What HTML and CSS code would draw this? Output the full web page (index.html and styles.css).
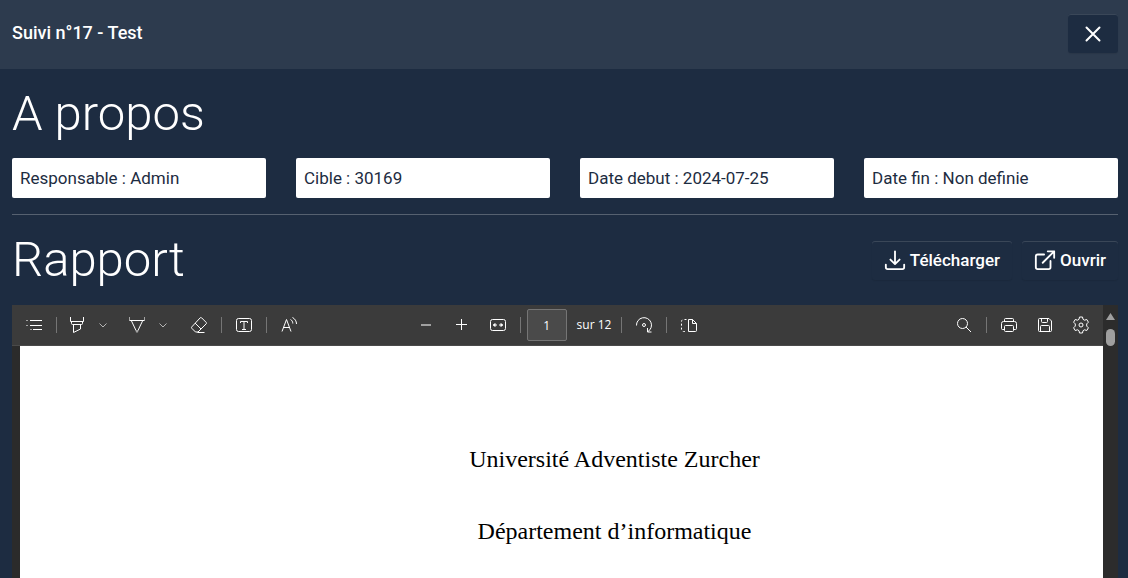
FILE: index.html
```html
<!DOCTYPE html>
<html lang="fr">
<head>
<meta charset="utf-8">
<meta name="viewport" content="width=device-width, initial-scale=1">
<title>Suivi n°17 - Test</title>
<link rel="stylesheet" href="styles.css">
</head>
<body class="dialog">
<header class="dialog-header">
  <h1 class="dialog-title">Suivi n°17 - Test</h1>
  <button class="btn btn-close" type="button" aria-label="Fermer">
    <svg class="icon-close" viewBox="0 0 16 16"><path d="M1.500 1.500l13 13M14.500 1.500l-13 13"/></svg>
  </button>
</header>
<main class="dialog-body">
  <h2 class="section-title">A propos</h2>
  <div class="facts">
    <p class="fact">Responsable : Admin</p>
    <p class="fact">Cible : 30169</p>
    <p class="fact">Date debut : 2024-07-25</p>
    <p class="fact">Date fin : Non definie</p>
  </div>
  <hr class="rule">
  <div class="report-head">
    <h2 class="section-title">Rapport</h2>
    <div class="actions">
      <button class="btn" type="button">
        <svg class="icon" viewBox="0 0 24 24"><path d="M12 2.500v13.500M7 11.500l5 5 5-5M2 17v3a2 2 0 0 0 2 2h16a2 2 0 0 0 2-2v-3"/></svg>
        <span>Télécharger</span>
      </button>
      <button class="btn" type="button">
        <svg class="icon" viewBox="0 0 24 24"><path d="M11 6H4a2 2 0 0 0-2 2v12a2 2 0 0 0 2 2h12a2 2 0 0 0 2-2v-7M15 2.500h7v7M22 2.500L9.500 15"/></svg>
        <span>Ouvrir</span>
      </button>
    </div>
  </div>
  <section class="viewer" aria-label="Rapport PDF">
    <div class="viewer-main">
      <div class="toolbar">
        <div class="tools">
          <button class="tool" type="button" aria-label="Table des matières"><svg class="glyph" viewBox="0 0 18 18"><path d="M5 4.500h12M5 9.500h12M8 13.500h9"/><path class="soft" d="M1 4.500h2M1 9.500h2M5 13.500h2"/></svg></button>
          <span class="sep"></span>
          <button class="tool tool-split" type="button" aria-label="Surligner"><svg class="glyph" viewBox="0 0 18 18"><path d="M2.500 1v4.500h13V1M3.500 5.500v2a1 1 0 0 0 1 1h9a1 1 0 0 0 1-1v-2M5.500 8.500v8l7-3.500v-4.500"/></svg></button>
          <button class="tool tool-menu" type="button" aria-label="Options de surlignage"><svg class="chevron" viewBox="0 0 10 10"><path d="M1.500 3.500l3.500 3.500 3.500-3.500"/></svg></button>
          <span class="space"></span>
          <button class="tool tool-split" type="button" aria-label="Dessiner"><svg class="glyph" viewBox="0 0 18 18"><path class="soft" d="M1.500 1v3.500M16.500 1v3.500"/><path d="M1.500 4.500h15M3.500 5l4.500 9.500h2l4.500-9.500"/><path class="tip" d="M7.500 14h3l-.5 2.500h-2z"/></svg></button>
          <button class="tool tool-menu" type="button" aria-label="Options de dessin"><svg class="chevron" viewBox="0 0 10 10"><path d="M1.500 3.500l3.500 3.500 3.500-3.500"/></svg></button>
          <span class="space"></span>
          <button class="tool" type="button" aria-label="Effacer"><svg class="glyph" viewBox="0 0 18 18"><path d="M10.200 1.800a1 1 0 0 1 1.400 0l4.600 4.600a1 1 0 0 1 0 1.400L8 16H5.500l-3.700-3.700a1 1 0 0 1 0-1.400zM5 7l6 6M7.500 16.500h7"/></svg></button>
          <span class="sep"></span>
          <button class="tool" type="button" aria-label="Ajouter du texte"><svg class="glyph" viewBox="0 0 18 18"><rect x="1.500" y="2.500" width="15" height="13" rx="2"/><path d="M5.500 7V5.500h7V7M9 5.500v8M7 13.500h4"/></svg></button>
          <span class="sep"></span>
          <button class="tool" type="button" aria-label="Lecture à voix haute"><svg class="glyph" viewBox="0 0 18 18"><path d="M2 15.500L6.500 3.500l4.500 12M3.500 11.500h6M10.500 3.500c1.500.8 2.300 2.200 2.300 4M12.500 1.500c2.500 1.300 4 3.700 4 6.500"/></svg></button>
        </div>
        <div class="tools">
          <button class="tool tool-off" type="button" aria-label="Zoom arrière"><svg class="glyph" viewBox="0 0 18 18"><path stroke-width="2" d="M4 9h10"/></svg></button>
          <button class="tool" type="button" aria-label="Zoom avant"><svg class="glyph" viewBox="0 0 18 18"><path d="M3 8.500h11M8.500 3v11"/></svg></button>
          <button class="tool" type="button" aria-label="Ajuster à la largeur"><svg class="glyph" viewBox="0 0 18 18"><rect x="1.500" y="3.500" width="15" height="11" rx="2"/><path d="M4 9h4M10 9h4"/><path fill="currentColor" d="M6 7.500L4.500 9 6 10.500zM12 7.500L13.500 9 12 10.500z"/></svg></button>
          <span class="sep"></span>
          <label class="pager"><input class="page-input" type="text" value="1" aria-label="Numéro de page"><span>sur 12</span></label>
          <span class="sep"></span>
          <button class="tool" type="button" aria-label="Faire pivoter"><svg class="glyph" viewBox="0 0 18 18"><path d="M1.500 9.500a7.500 7.500 0 1 1 11.500 6M12.500 12v4h4"/><circle cx="9" cy="9" r="1.500"/></svg></button>
          <span class="sep"></span>
          <button class="tool" type="button" aria-label="Affichage de la page"><svg class="glyph" viewBox="0 0 18 18"><path d="M8.500 3.500h4l4 4v7a1 1 0 0 1-1 1h-7zM12.500 3.500v4h4"/><path stroke-dasharray="2 2" d="M6.500 3.500h-3a2 2 0 0 0-2 2v8a2 2 0 0 0 2 2h3"/></svg></button>
        </div>
        <div class="tools tools-end">
          <button class="tool" type="button" aria-label="Rechercher"><svg class="glyph" viewBox="0 0 18 18"><circle cx="7.500" cy="7.500" r="5"/><path d="M11 11l5 5"/></svg></button>
          <span class="sep"></span>
          <button class="tool" type="button" aria-label="Imprimer"><svg class="glyph" viewBox="0 0 18 18"><path d="M4.500 5.500v-2a1 1 0 0 1 1-1h7a1 1 0 0 1 1 1v2M4.500 13.500h-2a1 1 0 0 1-1-1v-5a2 2 0 0 1 2-2h11a2 2 0 0 1 2 2v5a1 1 0 0 1-1 1h-2"/><rect x="4.500" y="9.500" width="9" height="6" rx="1"/></svg></button>
          <button class="tool" type="button" aria-label="Enregistrer"><svg class="glyph" viewBox="0 0 18 18"><path d="M3.500 2.500h9.500l2.500 2.500v9.500a1 1 0 0 1-1 1h-11a1 1 0 0 1-1-1v-11a1 1 0 0 1 1-1zM5.500 2.500v3a1 1 0 0 0 1 1h4a1 1 0 0 0 1-1v-3M4.500 15.500v-5a1 1 0 0 1 1-1h7a1 1 0 0 1 1 1v5"/></svg></button>
          <button class="tool" type="button" aria-label="Paramètres"><svg class="glyph" viewBox="0 0 18 18"><path d="M7.500 1h3l.5 2.300 1.500.9 2.300-.7 1.600 2.700-1.700 1.700v2.200l1.700 1.700-1.600 2.700-2.300-.7-1.500.9-.5 2.300h-3L7 14.700l-1.500-.9-2.300.7-1.600-2.700 1.700-1.700V7.900L1.600 6.200l1.600-2.700 2.300.7L7 3.300z"/><circle cx="9" cy="9" r="2"/></svg></button>
        </div>
      </div>
      <article class="sheet">
        <p class="sheet-line">Université Adventiste Zurcher</p>
        <p class="sheet-line">Département d’informatique</p>
      </article>
    </div>
    <div class="scrollbar" aria-hidden="true">
      <svg class="scroll-arrow" viewBox="0 0 9 7"><path d="M4.500 0L9 7H0z"/></svg>
      <span class="scroll-thumb"></span>
    </div>
  </section>
</main>
</body>
</html>
```
FILE: styles.css
```css
* {
  box-sizing: border-box;
}

.dialog {
  display: flex;
  flex-direction: column;
  height: 100vh;
  margin: 0;
  overflow: hidden;
  background: #1d2c41;
  color: #fff;
  font-family: Roboto, "Open Sans", sans-serif;
  font-size: 17px;
  line-height: 24px;
}

.dialog-header {
  display: flex;
  align-items: flex-start;
  justify-content: space-between;
  padding: 14px 10px 16px 12px;
  background: #2d3b4e;
}

.dialog-title {
  margin: 7px 0 0;
  font-size: 18px;
  font-weight: 500;
  line-height: 24px;
}

.btn {
  display: flex;
  align-items: center;
  gap: 4px;
  padding: 7px 12px 8px;
  border: 0;
  border-radius: 3px;
  background: #1d2c41;
  box-shadow: inset 0 1px 0 #3a4758, 0 1px 1px rgba(0, 0, 0, 0.08);
  color: #fff;
  font: 500 17px/24px Roboto, "Open Sans", sans-serif;
}

.btn-close {
  justify-content: center;
  width: 50px;
  height: 39px;
  padding: 0;
}

.icon-close,
.icon {
  fill: none;
  stroke: #fff;
  stroke-width: 2;
  stroke-linecap: round;
  stroke-linejoin: round;
}

.icon-close {
  width: 16px;
  height: 16px;
}

.icon {
  width: 22px;
  height: 22px;
}

.dialog-body {
  display: flex;
  flex: 1;
  flex-direction: column;
  min-height: 0;
  padding: 16px 10px 0 12px;
}

.section-title {
  margin: 0;
  font-size: 49px;
  font-weight: 300;
  line-height: 58px;
}

.facts {
  display: grid;
  grid-template-columns: repeat(4, 1fr);
  gap: 30px;
  margin-top: 15px;
}

.fact {
  margin: 0;
  padding: 8px;
  border-radius: 2px;
  background: #fff;
  color: #1d2c41;
}

.rule {
  width: 100%;
  margin: 16px 0;
  border: 0;
  border-top: 1px solid #566170;
}

.report-head {
  display: flex;
  align-items: center;
  justify-content: space-between;
  margin-bottom: 16px;
}

.actions {
  display: flex;
  gap: 10px;
}

.viewer {
  display: flex;
  flex: 1;
  min-height: 0;
  background: #2b2b2b;
}

.viewer-main {
  display: flex;
  flex: 1;
  flex-direction: column;
}

.toolbar {
  display: grid;
  flex: none;
  grid-template-columns: 1fr auto 1fr;
  align-items: center;
  height: 41px;
  padding: 0 4px;
  border-bottom: 1px solid #4a4a4a;
  background: #3b3b3b;
}

.tools {
  display: flex;
  align-items: center;
}

.tools-end {
  justify-content: flex-end;
}

.tool {
  display: flex;
  align-items: center;
  justify-content: center;
  width: 36px;
  height: 32px;
  padding: 0;
  border: 0;
  background: none;
  color: #fff;
}

.tool-split {
  width: 32px;
}

.tool-menu {
  width: 20px;
  color: #b5b5b5;
}

.tool-off {
  color: #a0a0a0;
}

.glyph,
.chevron {
  width: 18px;
  height: 18px;
  fill: none;
  stroke: currentColor;
  stroke-width: 1;
}

.chevron {
  width: 10px;
  height: 10px;
}

.soft {
  stroke: #a5a5a5;
}

.tip {
  fill: #a5a5a5;
  stroke: none;
}

.sep {
  width: 1px;
  height: 16px;
  margin: 0 4px;
  background: #757575;
}

.space {
  width: 8px;
}

.pager {
  display: flex;
  align-items: center;
  gap: 10px;
  padding: 0 6px 0 2px;
  font: 500 12px/16px "Open Sans", "Noto Sans", sans-serif;
}

.page-input {
  width: 40px;
  height: 32px;
  padding: 0;
  border: 1px solid #757575;
  border-radius: 2px;
  background: #4a4a4a;
  color: #fff;
  font: inherit;
  text-align: center;
}

.sheet {
  flex: 1;
  margin-left: 8px;
  padding: 99px 0 0 106px;
  background: #fff;
  color: #000;
  font: 24px/28px "Liberation Serif", "Times New Roman", serif;
  text-align: center;
}

.sheet-line {
  margin: 0 0 44px;
}

.scrollbar {
  display: flex;
  flex-direction: column;
  align-items: center;
  gap: 9px;
  width: 15px;
  padding-top: 8px;
  background: #2c2c2c;
}

.scroll-arrow {
  width: 9px;
  height: 7px;
  fill: #9f9f9f;
}

.scroll-thumb {
  width: 9px;
  height: 17px;
  border-radius: 5px;
  background: #9f9f9f;
}
```
